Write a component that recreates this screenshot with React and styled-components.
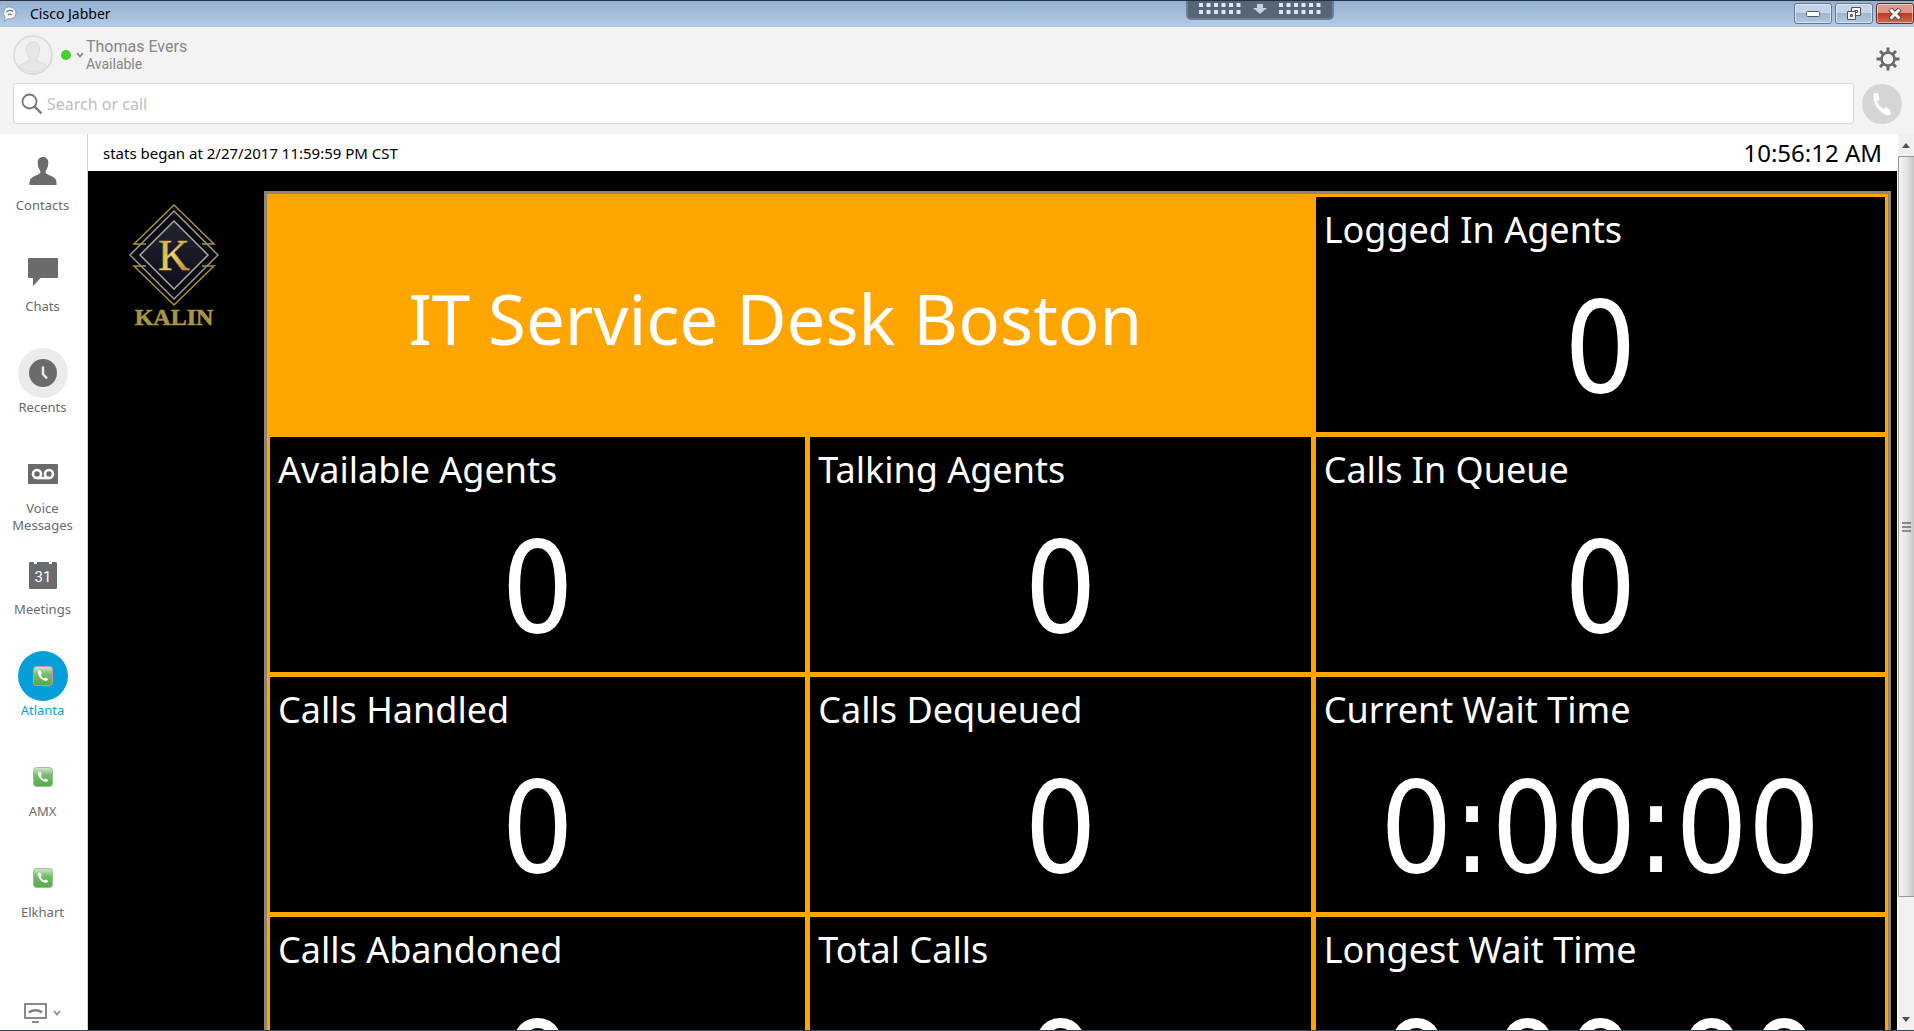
import * as React from "react"
import styled, { createGlobalStyle } from "styled-components"

const navItems = [
  { id: "contacts", label: "Contacts", icon: "contacts" },
  { id: "chats", label: "Chats", icon: "chats" },
  { id: "recents", label: "Recents", icon: "recents", tone: "#ebebeb" },
  { id: "voice", label: "Voice Messages", icon: "voice" },
  { id: "meetings", label: "Meetings", icon: "meetings" },
  { id: "atlanta", label: "Atlanta", icon: "phone", tone: "#049fd9" },
  { id: "amx", label: "AMX", icon: "phone" },
  { id: "elkhart", label: "Elkhart", icon: "phone" },
]

const stats = [
  { label: "Logged In Agents", value: "0" },
  { label: "Available Agents", value: "0" },
  { label: "Talking Agents", value: "0" },
  { label: "Calls In Queue", value: "0" },
  { label: "Calls Handled", value: "0" },
  { label: "Calls Dequeued", value: "0" },
  { label: "Current Wait Time", value: "0:00:00" },
  { label: "Calls Abandoned", value: "0" },
  { label: "Total Calls", value: "0" },
  { label: "Longest Wait Time", value: "0:00:00" },
]

const NavIcon = ({ name, active }) => {
  switch (name) {
    case "contacts":
      return (
        <svg width="28" height="28" viewBox="0 0 28 28" fill="#6a6b6c">
          <path d="M14 0c3.5 0 5.3 2.4 5.3 5.6 0 3.6-1 6.4-2.6 8.2v2.400c2 1.600 9 3.200 10.300 6.800.5 1.400.6 3 .6 5H.4c0-2 .1-3.600.6-5 1.300-3.600 8.300-5.200 10.300-6.800v-2.400C9.700 12 8.700 9.200 8.700 5.600 8.700 2.400 10.500 0 14 0z" />
        </svg>
      )
    case "chats":
      return (
        <svg width="30" height="28" viewBox="0 0 30 28" fill="#6a6b6c">
          <path d="M1 0h28a1 1 0 0 1 1 1v18a1 1 0 0 1-1 1H12.500L5 28v-8H1a1 1 0 0 1-1-1V1a1 1 0 0 1 1-1z" />
        </svg>
      )
    case "recents":
      return (
        <svg width="28" height="28" viewBox="0 0 28 28">
          <circle cx="14" cy="14" r="14" fill="#6a6b6c" />
          <path
            d="M14 7.500V15l4 4.500"
            fill="none"
            stroke="#ededed"
            strokeWidth="2.4"
          />
        </svg>
      )
    case "voice":
      return (
        <svg width="30" height="20" viewBox="0 0 30 20">
          <rect width="30" height="20" rx="1" fill="#6a6b6c" />
          <g fill="none" stroke="#fff" strokeWidth="2.6">
            <circle cx="9" cy="10" r="4" />
            <circle cx="21" cy="10" r="4" />
            <path d="M9 14h12" />
          </g>
        </svg>
      )
    case "meetings":
      return (
        <svg width="28" height="28" viewBox="0 0 28 28">
          <path
            d="M1 1h4v2h3V1h12v2h3V1h4l1 1v25l-1 1H1l-1-1V2z"
            fill="#6a6b6c"
          />
          <text
            x="14"
            y="21"
            textAnchor="middle"
            fill="#fff"
            fontFamily="Roboto, sans-serif"
            fontSize="15"
          >
            31
          </text>
        </svg>
      )
    default:
      return (
        <svg width="20" height="20" viewBox="0 0 20 20">
          <defs>
            <linearGradient id="phoneTile" x1="0" y1="0" x2="0" y2="1">
              <stop offset="0" stopColor="#d3ead0" />
              <stop offset="0.4" stopColor="#74bd69" />
              <stop offset="1" stopColor="#55a94a" />
            </linearGradient>
          </defs>
          <rect
            x="0.5"
            y="0.5"
            width="19"
            height="19"
            rx="3"
            fill="url(#phoneTile)"
            stroke={active ? "#d192a8" : "#8fca86"}
          />
          <path
            d="M6 4.500C4.700 5 4.500 6.300 5 7.800c1.100 3.600 4.200 6.600 7.600 7 1.400.1 2.400-.5 2.500-1.800l-2.500-1.600-1.600 1C9.500 11.800 8.300 10.300 7.800 8.800l1-1.400L7.500 4.600z"
            fill="#fff"
          />
        </svg>
      )
  }
}

const Chevron = () => (
  <svg width="8" height="6" viewBox="0 0 8 6">
    <path d="M1 1l3 3.500L7 1" fill="none" stroke="#8a8a8a" strokeWidth="1.8" />
  </svg>
)

const Dots = () => (
  <svg width="42" height="12" viewBox="0 0 42 12" fill="#dbe6f1">
    {[0, 1, 2, 3, 4, 5].map(i => (
      <React.Fragment key={i}>
        <rect x={i * 7.5} y="0" width="4" height="4" />
        <rect x={i * 7.5} y="7" width="4" height="4" />
      </React.Fragment>
    ))}
  </svg>
)

const Logo = () => (
  <svg width="90" height="126" viewBox="0 0 90 126" role="img" aria-label="Kalin">
    <defs>
      <linearGradient id="gold" x1="0" y1="0" x2="1" y2="0.3">
        <stop offset="0" stopColor="#b8862a" />
        <stop offset="0.5" stopColor="#f5dc6a" />
        <stop offset="1" stopColor="#c0902e" />
      </linearGradient>
      <linearGradient id="night" x1="0" y1="0" x2="0" y2="1">
        <stop offset="0" stopColor="#22262e" />
        <stop offset="1" stopColor="#0d0c1c" />
      </linearGradient>
    </defs>
    <path d="M45 8l43 44-43 44L2 52z" fill="#0a0b10" />
    <path d="M45 18l34 34-34 34-34-34z" fill="url(#night)" />
    <g fill="none" strokeWidth="1.5">
      <path d="M45 8l44 44-44 44L1 52z" stroke="#9b9a98" />
      <path d="M45 18l34 34-34 34-34-34z" stroke="#aaa8a6" />
      <path d="M17 41H5L45 2l40 39H73" stroke="#a89238" />
      <path d="M17 63H5l40 39 40-39H73" stroke="#a89238" />
    </g>
    <text
      x="45"
      y="67"
      textAnchor="middle"
      fill="url(#gold)"
      fontFamily="'Liberation Serif', serif"
      fontSize="44"
      stroke="#d9b348"
      strokeWidth="0.5"
    >
      K
    </text>
    <text
      x="45"
      y="122"
      textAnchor="middle"
      fill="#a8963f"
      stroke="#a8963f"
      strokeWidth="0.6"
      fontFamily="'Liberation Serif', serif"
      fontWeight="700"
      fontSize="24"
    >
      KALIN
    </text>
  </svg>
)

const App = () => {
  const [selected, setSelected] = React.useState("atlanta")
  const [query, setQuery] = React.useState("")

  return (
    <Window>
      <GlobalStyle />
      <TitleBar>
        <svg width="16" height="16" viewBox="0 0 16 16">
          <path
            d="M8 1a6.500 6 0 1 1-2 11.800L2.500 15l.5-4A6 6 0 0 1 8 1z"
            fill="#f4f6f8"
            stroke="#8c9cae"
          />
          <path
            d="M4.500 6c2-2 5-2 6.500-.5M6 9c1.500-1.500 3-1 3.500 0"
            fill="none"
            stroke="#67788c"
            strokeWidth="1.3"
          />
        </svg>
        <WindowName>Cisco Jabber</WindowName>
        <WindowButtons>
          <WindowButton aria-label="Minimize">
            <svg width="14" height="6" viewBox="0 0 14 6">
              <rect x="0.5" y="0.5" width="13" height="5" rx="1" fill="#fff" stroke="#535c6b" />
            </svg>
          </WindowButton>
          <WindowButton aria-label="Restore">
            <svg width="16" height="14" viewBox="0 0 16 14" fill="#f4f6f9" stroke="#4b5464">
              <path d="M5.500 0.500h9v8h-9z" />
              <path d="M8.500 3.500h3v2h-3z" />
              <path d="M1.500 4.500h8v8h-8z" />
              <path d="M4.500 7.500h2v2h-2z" fill="#91a8c4" />
            </svg>
          </WindowButton>
          <WindowButton $danger aria-label="Close">
            <svg width="16" height="12" viewBox="0 0 16 12">
              <path d="M3 1l10 10M13 1L3 11" stroke="#5d4150" strokeWidth="5" />
              <path d="M3.500 1.500l9 9M12.500 1.500l-9 9" stroke="#fff" strokeWidth="3" />
            </svg>
          </WindowButton>
        </WindowButtons>
        <SessionHandle aria-label="Show session bar">
          <Dots />
          <svg width="14" height="12" viewBox="0 0 14 12">
            <path d="M4 1h6v4h4l-7 6-7-6h4z" fill="#c3d2e2" />
          </svg>
          <Dots />
        </SessionHandle>
      </TitleBar>

      <Header>
        <Profile>
          <svg width="40" height="40" viewBox="0 0 40 40">
            <circle cx="20" cy="20" r="19" fill="#f0f0f0" stroke="#d8d8d8" strokeWidth="1.5" />
            <path
              d="M20 7c4.500 0 6.500 3 6.500 7 0 4-1.200 6.500-3 8.500v3c3 2 7.500 2.500 10 5.500a18 18 0 0 1-27 0c2.500-3 7-3.500 10-5.500v-3c-1.800-2-3-4.500-3-8.500 0-4 2-7 6.500-7z"
              fill="#e6e6e6"
              stroke="#dadada"
            />
          </svg>
          <Presence aria-label="Change status">
            <StatusDot />
            <Chevron />
          </Presence>
          <div>
            <UserName>Thomas Evers</UserName>
            <UserStatus>Available</UserStatus>
          </div>
        </Profile>
        <SettingsButton aria-label="Settings">
          <svg width="24" height="24" viewBox="0 0 24 24">
            <circle cx="12" cy="12" r="6.5" fill="none" stroke="#67686a" strokeWidth="2.5" />
            <g stroke="#67686a" strokeWidth="3">
              <path d="M12 0.500v4.500M12 19v4.500M0.500 12H5M19 12h4.500" />
              <path d="M4 4l3 3M17 17l3 3M20 4l-3 3M7 17l-3 3" />
            </g>
          </svg>
        </SettingsButton>
        <SearchBox>
          <svg width="22" height="22" viewBox="0 0 22 22" fill="none" stroke="#777">
            <circle cx="8.5" cy="8.5" r="7" strokeWidth="1.8" />
            <path d="M13.500 13.500l7 7" strokeWidth="2.4" />
          </svg>
          <SearchInput
            type="text"
            aria-label="Search or call"
            placeholder="Search or call"
            value={query}
            onChange={e => setQuery(e.target.value)}
          />
        </SearchBox>
        <CallButton aria-label="Call">
          <svg width="24" height="24" viewBox="0 0 24 24" fill="#fff">
            <path d="M4 1.500l4-.5 1.500 6.500-2.500 2c1 3 3.500 6 6.500 7.500l2.500-2 4.500 3.500v4c-1 1-2.500.8-4 .5C9.500 20.500 3.500 13 3.500 5c0-1.500 0-2.500.5-3.500z" />
          </svg>
        </CallButton>
      </Header>

      <Body>
        <Sidebar>
          <NavList>
            {navItems.map(({ id, label, icon, tone }) => (
              <li key={id}>
                <NavButton $active={selected === id} onClick={() => setSelected(id)}>
                  <IconDisc $tone={tone}>
                    <NavIcon name={icon} active={selected === id} />
                  </IconDisc>
                  <span>{label}</span>
                </NavButton>
              </li>
            ))}
          </NavList>
          <DeviceButton aria-label="Phone controls">
            <svg width="23" height="20" viewBox="0 0 23 20" fill="none" stroke="#7d7e80">
              <rect x="1" y="1" width="21" height="14" strokeWidth="1.8" />
              <path d="M5 9.500c3-3 10-3 13 0" strokeWidth="2.6" />
              <path d="M8 19h7" strokeWidth="1.8" />
            </svg>
            <Chevron />
          </DeviceButton>
        </Sidebar>

        <Content>
          <StatusRow>
            <span>stats began at 2/27/2017 11:59:59 PM CST</span>
            <Clock>10:56:12 AM</Clock>
          </StatusRow>
          <Wallboard>
            <LogoArea>
              <Logo />
            </LogoArea>
            <Board>
              <Banner>IT Service Desk Boston</Banner>
              {stats.map(({ label, value }) => (
                <Stat key={label}>
                  <StatLabel>{label}</StatLabel>
                  <StatValue>{value}</StatValue>
                </Stat>
              ))}
            </Board>
          </Wallboard>
        </Content>

        <Scrollbar>
          <ScrollArrow aria-label="Scroll up">
            <svg width="8" height="5" viewBox="0 0 8 5">
              <path d="M0 5l4-5 4 5z" fill="#505050" />
            </svg>
          </ScrollArrow>
          <ScrollTrack>
            <ScrollThumb>
              <svg width="9" height="10" viewBox="0 0 9 10">
                <path d="M0 1h9M0 5h9M0 9h9" stroke="#6c6c6c" strokeWidth="1.6" />
              </svg>
            </ScrollThumb>
          </ScrollTrack>
          <ScrollArrow aria-label="Scroll down">
            <svg width="8" height="5" viewBox="0 0 8 5">
              <path d="M0 0l4 5 4-5z" fill="#505050" />
            </svg>
          </ScrollArrow>
        </Scrollbar>
      </Body>
    </Window>
  )
}

const GlobalStyle = createGlobalStyle`
  * {
    box-sizing: border-box;
  }

  body {
    margin: 0;
    font-family: "Noto Sans", "Open Sans", sans-serif;
    color: #000;
  }

  button {
    border: 0;
    padding: 0;
    background: none;
    font: inherit;
    color: inherit;
    cursor: pointer;
  }

  svg {
    display: block;
    flex: none;
  }
`

const Window = styled.div`
  display: flex;
  flex-direction: column;
  height: 100vh;
  overflow: hidden;
  border-bottom: 1px solid #34465a;
`

const TitleBar = styled.header`
  position: relative;
  display: flex;
  flex: none;
  align-items: center;
  height: 27px;
  padding-left: 2px;
  border-top: 1px solid #27313d;
  background: linear-gradient(#93b1d0, #b3cce8);
`

const WindowName = styled.h1`
  flex: 1;
  margin: 0;
  padding-left: 12px;
  font-size: 14px;
  font-weight: 400;
  line-height: 20px;
`

const WindowButtons = styled.div`
  display: flex;
  align-self: flex-start;
  gap: 3px;
  padding-top: 2px;
`

const WindowButton = styled.button`
  display: flex;
  align-items: center;
  justify-content: center;
  width: 38px;
  height: 21px;
  && {
    border: 1px solid ${({ $danger }) => ($danger ? "#6e2a24" : "#64788f")};
    border-radius: 3px;
    box-shadow: inset 0 0 0 1px rgba(255, 255, 255, 0.5);
    background: ${({ $danger }) =>
      $danger
        ? "linear-gradient(#dd9a8c 45%, #bc3c22 50%, #cd6a4c)"
        : "linear-gradient(#c3d4e6 45%, #9db5cf 50%, #b5cae0)"};
  }
`

/* hangs over the title bar from the top edge of the screen */
const SessionHandle = styled.button`
  position: absolute;
  top: 0;
  right: 580px;
  display: flex;
  align-items: flex-start;
  justify-content: space-between;
  width: 148px;
  height: 19px;
  && {
    padding: 2px 11px;
    border: 2px solid #707e90;
    border-top: 0;
    border-radius: 0 0 5px 5px;
    background: #566577;
  }
`

const Header = styled.section`
  display: grid;
  flex: none;
  grid-template-columns: 1fr 40px;
  column-gap: 8px;
  row-gap: 8px;
  align-items: center;
  padding: 8px 12px 10px 13px;
  background: #f3f3f3;
`

const Profile = styled.div`
  display: flex;
  align-items: center;
`

const Presence = styled.button`
  display: flex;
  align-items: center;
  gap: 5px;
  margin: 0 2px 0 8px;
`

const StatusDot = styled.span`
  width: 10px;
  height: 10px;
  border-radius: 50%;
  background: #45d02f;
`

const UserName = styled.div`
  font-family: Roboto, sans-serif;
  font-size: 16px;
  line-height: 18px;
  color: #868686;
`

const UserStatus = styled.div`
  font-family: Roboto, sans-serif;
  font-size: 14px;
  line-height: 16px;
  color: #868686;
`

const SettingsButton = styled.button`
  display: flex;
  align-self: end;
  justify-content: center;
  width: 40px;
  height: 28px;
  && {
    padding-left: 12px;
  }
`

const SearchBox = styled.label`
  display: flex;
  align-items: center;
  gap: 4px;
  height: 41px;
  padding: 0 7px;
  border: 1px solid #d9d9d9;
  border-radius: 3px;
  background: #fff;
`

const SearchInput = styled.input`
  flex: 1;
  padding: 0;
  border: 0;
  outline: 0;
  background: none;
  font-family: inherit;
  font-size: 16px;

  &::placeholder {
    color: #bdbdbd;
  }
`

const CallButton = styled.button`
  display: flex;
  align-items: center;
  justify-content: center;
  width: 40px;
  height: 40px;
  && {
    border-radius: 50%;
    background: #d5d5d5;
  }
`

const Body = styled.div`
  display: flex;
  flex: 1;
  min-height: 0;
`

const Sidebar = styled.nav`
  display: flex;
  flex: none;
  flex-direction: column;
  justify-content: space-between;
  width: 88px;
  padding: 12px 2px 7px 0;
  border-right: 1px solid #d5d5d5;
  background: #fff;
`

const NavList = styled.ul`
  margin: 0;
  padding: 0;
  list-style: none;

  li {
    height: 101px;
  }
`

const NavButton = styled.button`
  display: flex;
  flex-direction: column;
  align-items: center;
  gap: 1px;
  width: 100%;
  && {
    font-size: 13px;
    line-height: 17px;
    color: ${({ $active }) => ($active ? "#049fd9" : "#6a6b6c")};
  }
`

const IconDisc = styled.span`
  display: flex;
  align-items: center;
  justify-content: center;
  width: 50px;
  height: 50px;
  border-radius: 50%;
  background: ${({ $tone }) => $tone || "transparent"};
`

const DeviceButton = styled.button`
  display: flex;
  align-items: center;
  gap: 6px;
  && {
    padding-left: 24px;
  }
`

const Content = styled.main`
  display: flex;
  flex: 1;
  flex-direction: column;
  min-width: 0;
`

const StatusRow = styled.div`
  display: flex;
  flex: none;
  align-items: center;
  justify-content: space-between;
  height: 37px;
  padding: 0 15px;
  background: #fff;
  font-size: 15px;
`

const Clock = styled.time`
  font-size: 24px;
`

const Wallboard = styled.div`
  display: flex;
  flex: 1;
  align-items: flex-start;
  min-height: 0;
  padding: 20px 6px 0 0;
  overflow: hidden;
  background: #000;
`

const LogoArea = styled.div`
  flex: none;
  width: 176px;
  padding: 12px 0 0 41px;
`

const Board = styled.div`
  display: grid;
  flex: 1;
  grid-template-columns: 535fr 500fr 569fr;
  grid-auto-rows: 235px;
  gap: 5px;
  padding: 3px;
  border: 3px solid #8f8676;
  background: #ffa500;
`

const Banner = styled.h2`
  display: flex;
  grid-column: span 2;
  align-items: center;
  justify-content: center;
  margin: 0;
  padding: 6px 30px 0 0;
  font-size: 69px;
  font-weight: 400;
  line-height: 80px;
  color: #fff;
`

const Stat = styled.section`
  padding: 8px;
  background: #000;
  color: #fff;
`

const StatLabel = styled.h3`
  margin: 0;
  font-size: 36px;
  font-weight: 400;
  line-height: 50px;
`

const StatValue = styled.div`
  font-family: "DejaVu Sans Condensed", "DejaVu Sans", sans-serif;
  font-size: 127px;
  line-height: 186px;
  text-align: center;
`

const Scrollbar = styled.div`
  display: flex;
  flex: none;
  flex-direction: column;
  width: 17px;
  border-left: 1px solid #fff;
  background: #f0f0f0;
`

const ScrollArrow = styled.button`
  display: flex;
  flex: none;
  align-items: center;
  justify-content: center;
  height: 22px;
`

const ScrollTrack = styled.div`
  flex: 1;
`

const ScrollThumb = styled.div`
  display: flex;
  align-items: center;
  justify-content: center;
  height: 87%;
  border: 1px solid #989898;
  border-right: 0;
  border-radius: 2px 0 0 2px;
  background: linear-gradient(90deg, #f5f5f5, #e4e4e4 50%, #c6c6c6);
`

export default App
